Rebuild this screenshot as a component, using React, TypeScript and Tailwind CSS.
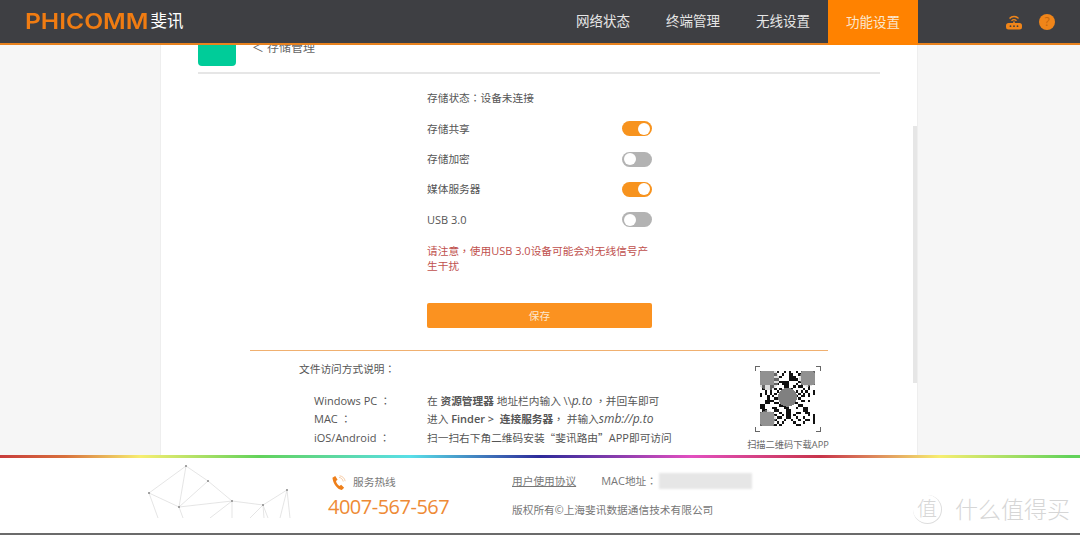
const cjk = "font-['Open_Sans','Noto_Sans_CJK_SC',sans-serif]";

const navItems = ['网络状态', '终端管理', '无线设置'];

function Toggle({ on }: { on: boolean }) {
  return (
    <div className={`flex h-[15px] w-[30px] items-center rounded-full px-[2px] ${on ? 'justify-end bg-[#f7931e]' : 'justify-start bg-[#b3b3b3]'}`}>
      <div className="h-[12px] w-[12px] rounded-full bg-white" />
    </div>
  );
}

function SettingRow({ label, on }: { label: string; on: boolean }) {
  return (
    <div className="flex h-[30.4px] items-center justify-between">
      <span>{label}</span>
      <Toggle on={on} />
    </div>
  );
}

// centred full-width punctuation, as in the screenshot
function Punct({ children }: { children: string }) {
  return <span className="font-['Noto_Sans_CJK_TC',sans-serif]">{children}</span>;
}

function Latin({ children }: { children: React.ReactNode }) {
  return <span className="text-[11px]">{children}</span>;
}

function RouterIcon() {
  return (
    <svg width="16" height="16" viewBox="0 0 16 16" fill="none">
      <path d="M3.5 4.5C6 1.8 10 1.8 12.5 4.5" stroke="#f08519" strokeWidth="1.4" />
      <path d="M5.5 6.8C7 5.4 9 5.4 10.5 6.8" stroke="#f08519" strokeWidth="1.4" />
      <rect x="7.2" y="7.5" width="1.6" height="2" fill="#f08519" />
      <rect x="0" y="9" width="16" height="6.5" rx="2.5" fill="#f08519" />
      <circle cx="4.5" cy="12.2" r="0.9" fill="#3e3f43" />
      <circle cx="8" cy="12.2" r="0.9" fill="#3e3f43" />
      <circle cx="11.5" cy="12.2" r="0.9" fill="#3e3f43" />
    </svg>
  );
}

const qrCells = Array.from({ length: 23 * 23 }, (_, i) => {
  const x = i % 23;
  const y = Math.floor(i / 23);
  return ((x * 7 + y * 13 + x * y * 3 + (x ^ y)) % 5) < 2;
});

function QrCode() {
  return (
    <div className="relative h-[66px] w-[66px]">
      {/* corner ticks */}
      <div className="absolute left-0 top-0 h-[5px] w-[5px] border-l border-t border-[#666]" />
      <div className="absolute right-0 top-0 h-[5px] w-[5px] border-r border-t border-[#666]" />
      <div className="absolute bottom-0 left-0 h-[5px] w-[5px] border-b border-l border-[#666]" />
      <div className="absolute bottom-0 right-0 h-[5px] w-[5px] border-b border-r border-[#666]" />
      <svg className="absolute left-[5px] top-[5px]" width="55" height="55" viewBox="0 0 23 23" shapeRendering="crispEdges">
        {qrCells.map((on, i) => on && <rect key={i} x={i % 23} y={Math.floor(i / 23)} width="1" height="1" fill="#111" />)}
        <rect x="0" y="0" width="6" height="6" fill="#666" />
        <rect x="17" y="0" width="6" height="6" fill="#666" />
        <rect x="0" y="17" width="6" height="6" fill="#666" />
        <circle cx="3.5" cy="3.5" r="4.5" fill="#bbb" opacity="0.5" />
        <circle cx="20" cy="3" r="3.6" fill="#bbb" opacity="0.5" />
        <circle cx="3" cy="20" r="3.6" fill="#bbb" opacity="0.5" />
        <circle cx="11.5" cy="11" r="4" fill="#808080" />
      </svg>
    </div>
  );
}

function NetworkArt() {
  const points: [number, number][] = [[38, 2], [60, 17], [1, 29], [31, 43], [84, 37], [115, 41], [139, 26]];
  return (
    <svg width="150" height="54" viewBox="0 0 150 54" fill="none" stroke="#dedede" strokeWidth="0.8">
      <path d="M38 2L1 29L10 54M38 2L31 43M38 2L60 17L84 37M1 29L31 43L35 54M60 17L31 43L84 37L115 41L139 26L132 54M139 26L142 54M84 37L62 54M84 37L84 54M115 41L102 54M115 41L120 54M115 41L116 54" />
      {points.map(([x, y]) => <circle key={`${x}-${y}`} cx={x} cy={y} r="1" fill="#888" stroke="none" />)}
    </svg>
  );
}

function PhoneIcon() {
  return (
    <svg width="16" height="15" viewBox="0 0 16 16" fill="none">
      <path d="M1 3L4 1L6.5 5L4.8 6.5C5.2 8.5 6.5 10.5 8.5 11.8L10.3 10.5L13.5 13.5L11 16C6 15.5 1.5 9 1 3Z" fill="#ee7f1a" />
      <path d="M8 2.5C10.5 3 12 4.5 12.5 7M8.5 .8C12 1.3 14 3.5 14.6 6.6" stroke="#f3b27a" strokeWidth="0.7" />
    </svg>
  );
}

export default function App() {
  return (
    <div className={`${cjk} flex h-[535px] w-[1080px] flex-col overflow-hidden bg-[#f6f6f6] text-[10.7px] text-[#555]`}>
      <header className="flex h-[45px] shrink-0 items-stretch justify-between border-b-2 border-[#e8821e] bg-[#3e3f43]">
        <div className="flex items-center pl-[25px] pb-[1px]">
          <span className="origin-left scale-x-[1.118] font-['Inter',sans-serif] text-[22px] font-semibold leading-none text-[#f07c12]">PHICOMM</span>
          <span className="ml-[15px] text-[16.5px] leading-none text-white">斐讯</span>
        </div>
        <div className="flex items-stretch">
          <nav className="flex items-stretch">
            {navItems.map(item => (
              <a key={item} className="flex w-[90px] items-center justify-center text-[13.5px] text-[#e6e6e6]">{item}</a>
            ))}
            <a className="mb-[-2px] flex w-[90px] items-center justify-center bg-[#ff8200] text-[13.5px] text-[#fbe7cf]">功能设置</a>
          </nav>
          <div className="flex w-[162px] items-center justify-end gap-[17px] pr-[25px]">
            <RouterIcon />
            <div className="flex h-[16px] w-[16px] items-center justify-center rounded-full bg-[#f08519] text-[12px] leading-none text-[#c4660e]">?</div>
          </div>
        </div>
      </header>

      <main className="flex min-h-0 flex-1 pl-[160px]">
        <div className="relative flex h-full w-[758px] flex-col overflow-hidden border-x border-[#eeeeee] bg-white">
          <div className="absolute right-0 top-[81px] h-[257px] w-[4px] bg-[#e6e6e6]" />
          <div className="ml-[37px] mr-[37px] flex h-[29px] shrink-0 border-b-2 border-[#e6e6e6]">
            <div className="h-[21px] w-[38px] rounded-b-[4px] bg-[#00cc99]" />
            <span className="ml-[16px] mt-[-4px] text-[12px] leading-[14px] text-[#666]">＜ 存储管理</span>
          </div>

          <section className="ml-[266px] mt-[16px] w-[225px]">
            <div className="mb-[7.5px] flex h-[16px] items-center">存储状态<Punct>：</Punct>设备未连接</div>
            <SettingRow label="存储共享" on />
            <SettingRow label="存储加密" on={false} />
            <SettingRow label="媒体服务器" on />
            <div className="flex h-[30.4px] items-center justify-between">
              <Latin>USB 3.0</Latin>
              <Toggle on={false} />
            </div>
            <p className="mt-[7.5px] leading-[15px] text-[#c0504d]">请注意<Punct>，</Punct>使用<Latin>USB 3.0</Latin>设备可能会对无线信号产生干扰</p>
            <button className="mt-[29.5px] flex h-[25px] w-full items-center justify-center rounded-[2px] bg-[#fb9220] text-[#fbe7cf]">保存</button>
          </section>

          <div className="mx-[89px] mt-[22px] border-t border-[#f0b070]">
            <div className="relative h-[105px]">
              <div className="pl-[49px] pt-[10px] leading-[16px]">文件访问方式说明<Punct>：</Punct></div>
              <div className="mt-[15.75px] grid grid-cols-[113px_1fr] gap-y-[2px] pl-[64px] leading-[16.5px]">
                <span><Latin>Windows PC</Latin> <Punct>：</Punct></span>
                <span>在 <b className="font-semibold">资源管理器</b> 地址栏内输入 <Latin>\\</Latin><i className="text-[12px]">p.to</i> <Punct>，</Punct>并回车即可</span>
                <span><Latin>MAC</Latin> <Punct>：</Punct></span>
                <span>进入 <b className="font-semibold"><Latin>Finder &gt;&nbsp;</Latin> 连接服务器</b><Punct>，</Punct> 并输入<i className="text-[12px]">smb://p.to</i></span>
                <span><Latin>iOS/Android</Latin> <Punct>：</Punct></span>
                <span>扫一扫右下角二维码安装<Punct>“</Punct>斐讯路由<Punct>”</Punct><Latin>APP</Latin>即可访问</span>
              </div>
              <div className="absolute right-[-1px] top-[15px] flex w-[82px] flex-col items-center">
                <QrCode />
                <span className="mt-[6px] whitespace-nowrap text-[9.25px] leading-[14px] text-[#666]">扫描二维码下载APP</span>
              </div>
            </div>
          </div>
        </div>
      </main>

      <footer className="relative flex h-[80px] shrink-0 border-b-2 border-[#6b6b6b] bg-white">
        <div className="absolute inset-x-0 top-0 h-[3px] bg-[linear-gradient(90deg,#c83c3c_0%,#d8703c_6%,#f7ee70_13%,#62d25a_24%,#58dfe8_38%,#2d2a9a_50%,#e24fc0_64%,#c8344a_76%,#f7ee70_87%,#62d25a_99%,#62d25a_100%)]" />
        <div className="ml-[148px] mt-[9px]"><NetworkArt /></div>
        <div className="ml-[30px] mt-[20px] flex w-[184px] flex-col">
          <div className="flex h-[15px] items-center gap-[6px] pl-[3px] text-[#777]"><PhoneIcon /><span>服务热线</span></div>
          <div className="mt-[4px] text-[20px] leading-[26px] tracking-[-0.5px] text-[#ee8a35]">4007-567-567</div>
        </div>
        <div className="mt-[18px] flex flex-col text-[#777]">
          <div className="flex h-[16px] items-center">
            <span className="underline">用户使用协议</span>
            <span className="ml-[25px]"><Latin>MAC</Latin>地址<Punct>：</Punct></span>
            <div className="ml-[2px] h-[16px] w-[93px] bg-[#e6e6e6] blur-[1px]" />
          </div>
          <div className="mt-[13px] leading-[16px]">版权所有©上海斐讯数据通信技术有限公司</div>
        </div>
        <div className="absolute right-[10px] top-[40px] flex items-center gap-[13px] text-[#d6d6d6]">
          <span className="flex h-[29px] w-[29px] items-center justify-center rounded-full border-b border-r border-[#dddddd] text-[20px] font-light">值</span>
          <span className="text-[23px] font-light leading-none">什么值得买</span>
        </div>
      </footer>
    </div>
  );
}
